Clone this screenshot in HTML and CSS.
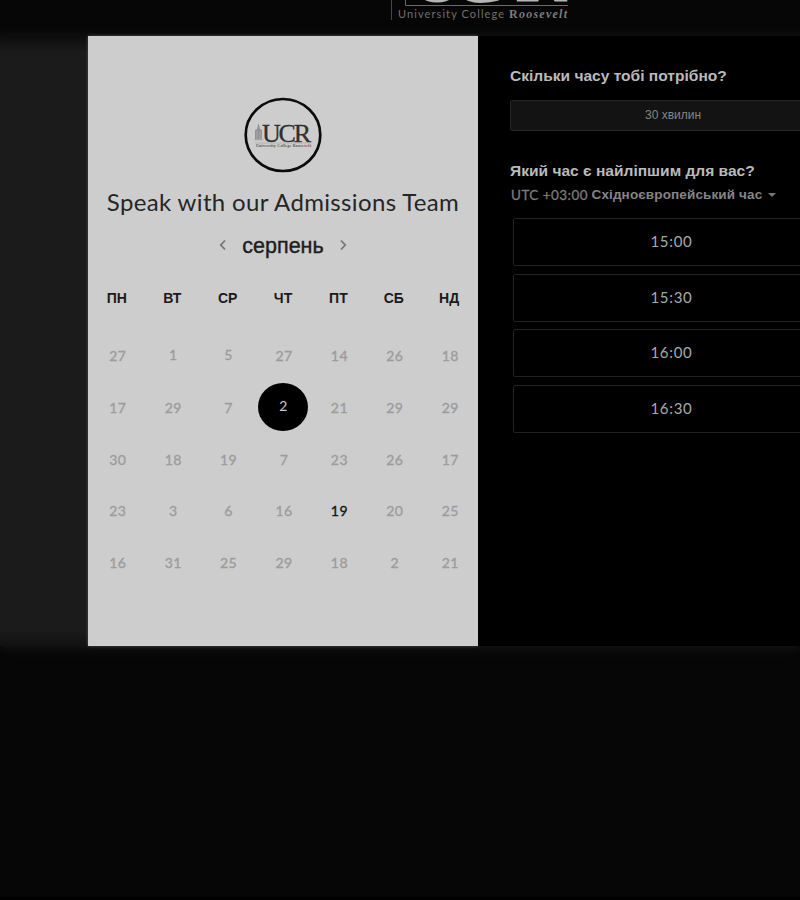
FILE: index.html
```
<!DOCTYPE html>
<html lang="uk">
<head>
<meta charset="utf-8">
<title>Speak with our Admissions Team</title>
<link rel="stylesheet" href="styles.css">
</head>
<body>
<header class="top">
  <svg class="brand" width="190" height="24" viewBox="0 0 190 24">
    <path d="M6.500 0V20" stroke="#464646" fill="none"/>
    <path d="M20.500 0V5.500H183" stroke="#6a6a6a" fill="none"/>
    <text class="brand-big" x="23 65 129" y="2">UCR</text>
    <text class="brand-name" x="13" y="17.500" textLength="106">University College</text>
    <text class="brand-last" x="124" y="17.500" textLength="58"><tspan class="cap">R</tspan>oosevelt</text>
  </svg>
</header>
<main class="stage">
  <section class="calendar">
    <svg class="seal" width="78" height="76" viewBox="0 0 78 76">
      <ellipse cx="39" cy="38" rx="37.300" ry="36" fill="none" stroke="#0b0b0b" stroke-width="2.700"/>
      <path d="M11 43V33l2-1 1.500-6 1.500 6 2 1v10z" fill="#929292"/>
      <path d="M13 34v9M16 34v9M10 43h10" stroke="#b4b4b4" stroke-width=".7"/>
      <text class="seal-big" x="18" y="45" textLength="49">UCR</text>
      <path d="M11 46H67" stroke="#999" stroke-width=".5"/>
      <text class="seal-name" x="12" y="49.500" textLength="55">University College Roosevelt</text>
    </svg>
    <h1 class="title">Speak with our Admissions Team</h1>
    <div class="month">
      <svg width="8" height="12" viewBox="0 0 8 12"><path d="M6 1.500 1.800 6 6 10.500" class="chev"/></svg>
      <span class="month-name">серпень</span>
      <svg width="8" height="12" viewBox="0 0 8 12"><path d="M2 1.500 6.200 6 2 10.500" class="chev"/></svg>
    </div>
    <div class="week"><span>ПН</span><span>ВТ</span><span>СР</span><span>ЧТ</span><span>ПТ</span><span>СБ</span><span>НД</span></div>
    <div class="days">
      <span>27</span><span class="up">1</span><span class="up">5</span><span>27</span><span>14</span><span>26</span><span>18</span>
      <span>17</span><span>29</span><span>7</span><span class="picked">2</span><span>21</span><span>29</span><span>29</span>
      <span>30</span><span>18</span><span>19</span><span>7</span><span>23</span><span>26</span><span>17</span>
      <span>23</span><span>3</span><span>6</span><span>16</span><span class="open">19</span><span>20</span><span>25</span>
      <span>16</span><span>31</span><span>25</span><span>29</span><span>18</span><span>2</span><span>21</span>
    </div>
  </section>
  <section class="booking">
    <h2 class="q q-length">Скільки часу тобі потрібно?</h2>
    <div class="length">30 хвилин</div>
    <h2 class="q q-time">Який час є найліпшим для вас?</h2>
    <div class="zone"><span class="utc">UTC +03:00</span><span class="zone-name">Східноєвропейський час</span><i class="caret"></i></div>
    <div class="slots">
      <div class="slot">15:00</div><div class="slot">15:30</div><div class="slot">16:00</div><div class="slot">16:30</div>
    </div>
  </section>
</main>
</body>
</html>
```
FILE: styles.css
```
* { box-sizing: border-box; }
html { background: #000; }
body { margin: 0; width: 800px; height: 897px; overflow: hidden; background: #060606; font-family: "Liberation Sans", sans-serif; }
h1, h2 { margin: 0; font-weight: normal; white-space: nowrap; }
.top { height: 36px; padding-left: 385px; background: linear-gradient(#060606 26px, #0b0b0b); }
.brand { display: block; }
.brand-big { font: 80px "Liberation Serif", serif; fill: #b5b5b5; }
.brand-name { font: 11px Lato, sans-serif; fill: #707070; }
.brand-last { font: italic bold 12px "Liberation Serif", serif; fill: #7c7c7c; }
.cap { font-style: normal; }
.stage { display: flex; height: 610px; padding-left: 88px; background: linear-gradient(#0c0c0c, #1b1b1b 16px, #1b1b1b 594px, #111); box-shadow: 0 3px 10px #151515; }
.calendar { flex: none; width: 390px; background: #cdcdcd; display: flex; flex-direction: column; align-items: center; box-shadow: 0 0 3px #555; }
.seal { margin-top: 61px; flex: none; }
.seal-big { font: 26px "Liberation Serif", serif; fill: #303030; stroke: #303030; stroke-width: .3px; }
.seal-name { font: bold 4px "Liberation Serif", serif; fill: #555; }
.title { margin-top: 14px; height: 30px; font: 24px/30px Lato, sans-serif; letter-spacing: .35px; color: #262626; }
.month { display: flex; align-items: center; justify-content: center; gap: 15px; height: 26px; margin-top: 15px; }
.month-name { padding-top: 2px; font-size: 21.500px; line-height: 26px; color: #1d1d1d; -webkit-text-stroke: .4px #1d1d1d; }
.chev { fill: none; stroke: #777; stroke-width: 1.800; }
.week { display: grid; grid-template-columns: repeat(7, 55.4px); height: 20px; margin-top: 30px; text-align: center; font: bold 14px/20px "Liberation Sans", sans-serif; color: #1a1a1a; }
.days { display: grid; grid-template-columns: repeat(7, 55.4px); grid-auto-rows: 51.8px; margin-top: 22px; padding-left: 2px; text-align: center; font: 14px/51.8px Lato, sans-serif; letter-spacing: .4px; color: #9c9c9c; -webkit-text-stroke: .35px; }
.up { margin-top: -1px; }
.open { color: #161616; }
.picked { justify-self: center; width: 50px; height: 48px; margin: 1px 1px 0 0; border-radius: 50%; background: #000; color: #c9c9c9; line-height: 46px; -webkit-text-stroke: 0; }
.booking { flex: 1; min-width: 0; overflow: hidden; padding: 28px 0 0 32px; background: #000; }
.q { font: bold 15.550px/24px "Liberation Sans", sans-serif; color: #bababa; }
.length { width: 326px; height: 31px; margin-top: 12px; border: 1px solid #262626; border-radius: 2px; background: #131313; color: #858585; text-align: center; font-size: 12px; line-height: 28px; }
.q-time { margin-top: 28px; }
.zone { display: flex; align-items: center; height: 24px; padding-left: 1px; font-size: 13.500px; line-height: 24px; color: #858585; white-space: nowrap; }
.utc { font: 13.500px/24px Lato, sans-serif; letter-spacing: .45px; width: 80.500px; color: #7c7c7c; -webkit-text-stroke: .3px; }
.zone-name { font-weight: bold; letter-spacing: .13px; }
.caret { margin-left: 6px; border: 4px solid transparent; border-top-color: #777; border-bottom: 0; }
.slots { display: grid; gap: 7.500px; width: 317px; margin: 11px 0 0 3px; }
.slot { height: 48px; border: 1px solid #222; border-radius: 2px; color: #a9a9a9; text-align: center; font: 15px/45px Lato, sans-serif; letter-spacing: .7px; }
```
